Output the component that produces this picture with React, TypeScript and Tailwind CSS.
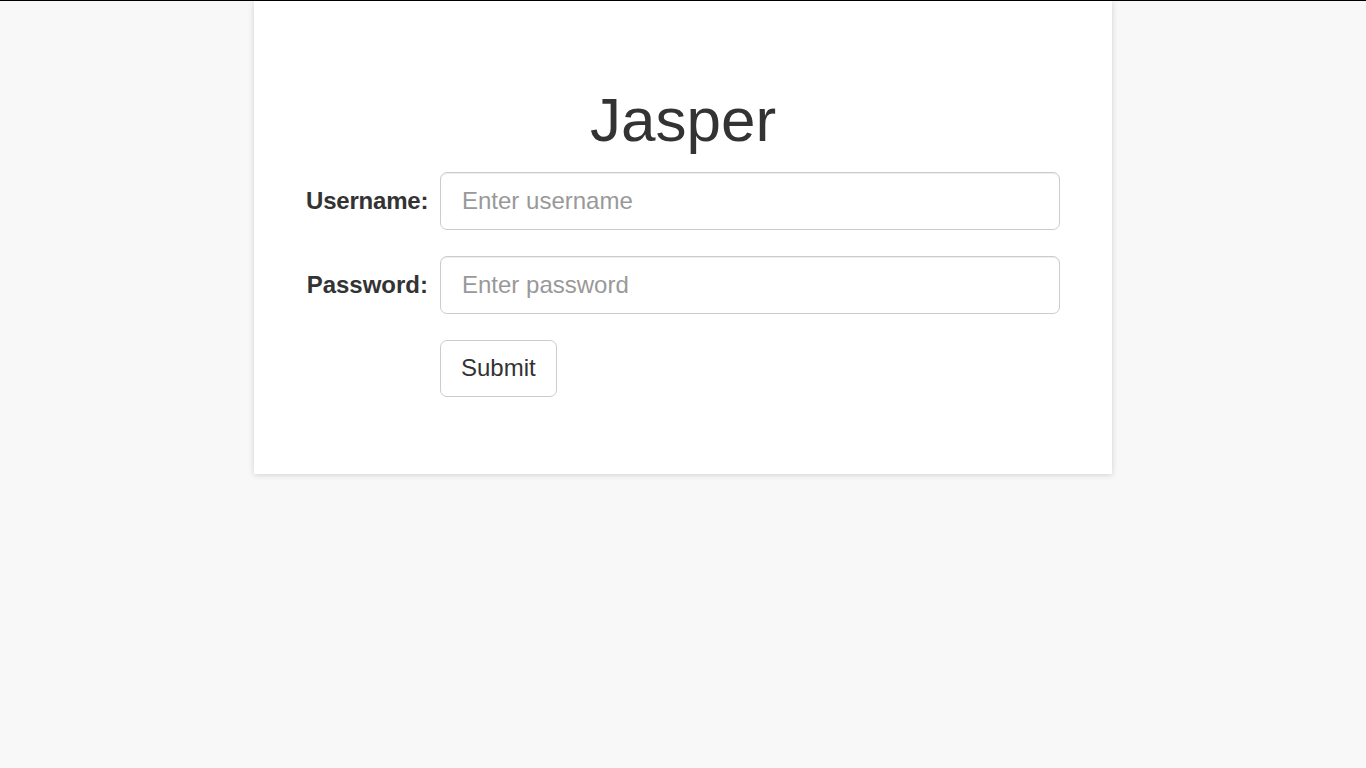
import React from "react";

export default function App() {
  return (
    <div
      className="min-h-screen bg-[#f8f8f8] text-[#333333]"
      style={{ fontFamily: '"Liberation Sans", Arial, Helvetica, sans-serif' }}
    >
      <div className="h-px w-full bg-black" />
      <div className="mx-auto w-[858px] bg-white px-[52px] pt-[85px] pb-[77px] shadow-[0_1px_6px_rgba(0,0,0,0.16)]">
        <h1 className="m-0 h-[68px] text-center text-[62px] font-normal leading-[68px]">Jasper</h1>
        <form className="mt-[18px] flex flex-col gap-[26px]" onSubmit={(e) => e.preventDefault()}>
          <div className="flex items-center gap-[12px]">
            <label className="w-[122px] whitespace-nowrap text-right text-[24px] font-bold tracking-[-0.2px]">Username:</label>
            <input
              type="text"
              placeholder="Enter username"
              className="h-[58px] w-[620px] rounded-[7px] border border-[#cccccc] bg-white px-[21px] text-[24px] text-[#555] shadow-[inset_0_1px_1px_rgba(0,0,0,0.075)] outline-none placeholder:text-[#999999]"
            />
          </div>
          <div className="flex items-center gap-[12px]">
            <label className="w-[122px] whitespace-nowrap text-right text-[24px] font-bold">Password:</label>
            <input
              type="password"
              placeholder="Enter password"
              className="h-[58px] w-[620px] rounded-[7px] border border-[#cccccc] bg-white px-[21px] text-[24px] text-[#555] shadow-[inset_0_1px_1px_rgba(0,0,0,0.075)] outline-none placeholder:text-[#999999]"
            />
          </div>
          <div className="flex gap-[12px]">
            <div className="w-[122px]" />
            <button
              type="submit"
              className="h-[57px] rounded-[7px] border border-[#cccccc] bg-white px-[20px] pb-[2px] text-[24px] text-[#333333]"
            >
              Submit
            </button>
          </div>
        </form>
      </div>
    </div>
  );
}
